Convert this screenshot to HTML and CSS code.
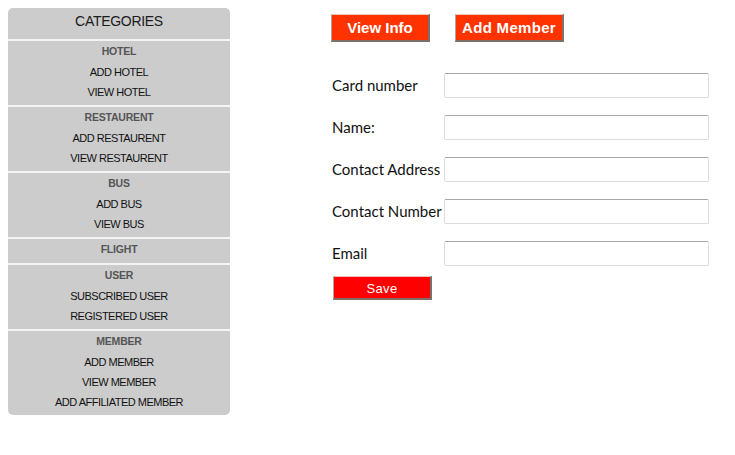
FILE: index.html
```html
<!DOCTYPE html>
<html>
<head>
<meta charset="utf-8">
<link rel="stylesheet" href="styles.css">
</head>
<body>
<div class="page">
  <nav class="sidebar">
    <div class="sb-title">CATEGORIES</div>
    <div class="sb-section">
      <div class="sb-head">HOTEL</div>
      <div class="sb-item">ADD HOTEL</div>
      <div class="sb-item">VIEW HOTEL</div>
    </div>
    <div class="sb-section">
      <div class="sb-head">RESTAURENT</div>
      <div class="sb-item">ADD RESTAURENT</div>
      <div class="sb-item">VIEW RESTAURENT</div>
    </div>
    <div class="sb-section">
      <div class="sb-head">BUS</div>
      <div class="sb-item">ADD BUS</div>
      <div class="sb-item">VIEW BUS</div>
    </div>
    <div class="sb-section">
      <div class="sb-head">FLIGHT</div>
    </div>
    <div class="sb-section">
      <div class="sb-head">USER</div>
      <div class="sb-item">SUBSCRIBED USER</div>
      <div class="sb-item">REGISTERED USER</div>
    </div>
    <div class="sb-section">
      <div class="sb-head">MEMBER</div>
      <div class="sb-item">ADD MEMBER</div>
      <div class="sb-item">VIEW MEMBER</div>
      <div class="sb-item">ADD AFFILIATED MEMBER</div>
    </div>
  </nav>
  <main class="content">
    <div class="tabs">
      <button class="tab tab-view">View Info</button>
      <button class="tab tab-add">Add Member</button>
    </div>
    <form class="form">
      <div class="row"><label class="lbl">Card number</label><input class="field" type="text"></div>
      <div class="row"><label class="lbl">Name:</label><input class="field" type="text"></div>
      <div class="row"><label class="lbl">Contact Address</label><input class="field" type="text"></div>
      <div class="row"><label class="lbl">Contact Number</label><input class="field" type="text"></div>
      <div class="row"><label class="lbl">Email</label><input class="field" type="text"></div>
      <button class="save" type="button">Save</button>
    </form>
  </main>
</div>
</body>
</html>
```
FILE: styles.css
```css
* { box-sizing: border-box; }
body {
  margin: 8px;
  background: #fff;
  font-family: "Liberation Sans", Arial, sans-serif;
}
.page {
  display: flex;
  align-items: flex-start;
  gap: 101px;
}
.sidebar {
  width: 222px;
  flex: none;
  background: #cccccc;
  border-radius: 5px;
  text-align: center;
}
.sb-title {
  height: 31px;
  line-height: 27px;
  font-size: 14px;
  letter-spacing: -0.3px;
  color: #1a1a1a;
}
.sb-section {
  border-top: 2px solid #f4f4f4;
  padding-bottom: 3px;
}
.sb-head {
  height: 21px;
  line-height: 21px;
  font-size: 10.5px;
  font-weight: bold;
  color: #555;
  letter-spacing: -0.2px;
}
.sb-item {
  height: 20px;
  line-height: 20px;
  font-size: 11px;
  letter-spacing: -0.5px;
  color: #111;
}
.content {
  padding-top: 6px;
}
.tabs {
  display: flex;
  gap: 25px;
}
.tab {
  height: 28px;
  padding: 0;
  background: #ff3300;
  color: #fff;
  font-family: "Liberation Sans", Arial, sans-serif;
  font-weight: bold;
  font-size: 15px;
  border-style: solid;
  border-width: 1px 2px 2px 1px;
  border-color: #e8c8c0 #7d706a #7d706a #b0a49e;
  cursor: pointer;
}
.tab-view { width: 99px; }
.tab-add { width: 109px; letter-spacing: 0.3px; }
.form {
  margin-top: 31px;
  display: flex;
  flex-direction: column;
  gap: 17px;
}
.row {
  display: flex;
  align-items: center;
  height: 25px;
  margin-left: 1px;
}
.lbl {
  width: 112px;
  flex: none;
  white-space: nowrap;
  font-family: Lato, "Open Sans", sans-serif;
  font-size: 15px;
  color: #111;
  margin-top: -2px;
}
.field {
  width: 265px;
  height: 25px;
  border: 1px solid #dcdcdc;
  border-top-color: #a8a8a8;
  border-radius: 2px;
  background: #fff;
  padding: 2px 4px;
}
.save {
  margin-top: -7px;
  margin-left: 2px;
  width: 99px;
  height: 24px;
  padding: 2px 0 0;
  background: #ff0000;
  color: #fff;
  font-family: "Liberation Sans", Arial, sans-serif;
  font-size: 13px;
  letter-spacing: 0.3px;
  border-style: solid;
  border-width: 1px 2px 2px 1px;
  border-color: #e8c0c0 #7d706a #7d706a #b0a49e;
}
```
